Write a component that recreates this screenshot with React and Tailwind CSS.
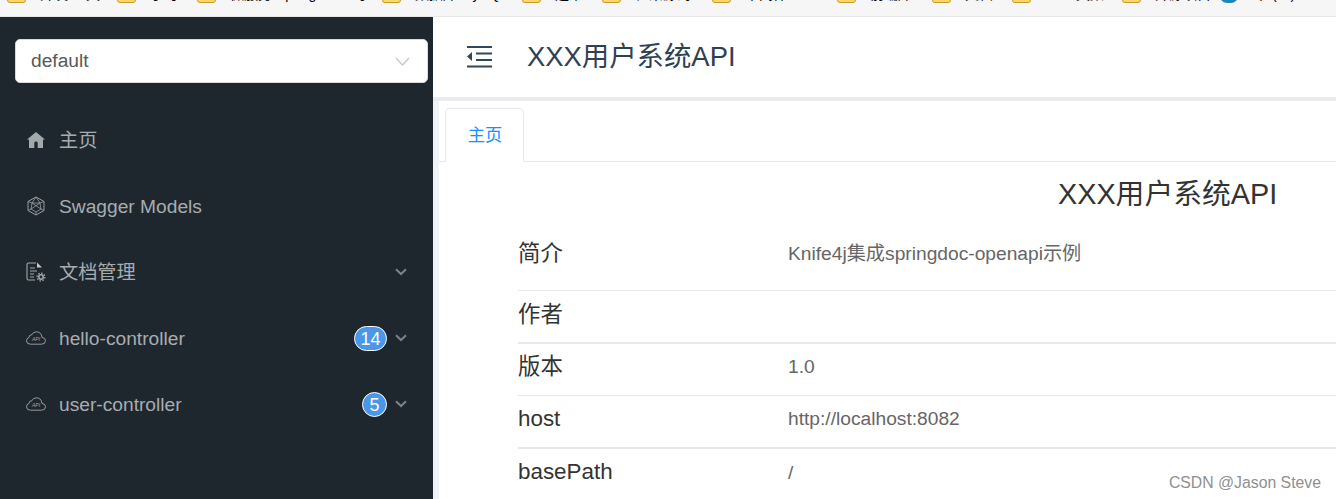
const FONT = '"Liberation Sans", "Noto Sans CJK SC", sans-serif';

const bookmarks = [
  ['w-[110px]', '开发 工具'],
  ['w-[80px]', '学习'],
  ['w-[185px]', '微服务 SpringCloud 学'],
  ['w-[140px]', '数据库 MySQL'],
  ['w-[80px]', '运维'],
  ['w-[110px]', '框架源码'],
  ['w-[125px]', '中间件 Redis'],
  ['w-[95px]', '前端库'],
  ['w-[80px]', '文档'],
  ['w-[110px]', 'AI 工具集'],
  ['w-[98px]', '开源项目'],
];

function Home() {
  return (
    <svg width="18" height="16" viewBox="0 0 18 16" fill="#a3a8ab">
      <path fillRule="evenodd" d="M9 0 L18 7.6 L16 7.6 L16 16 L2 16 L2 7.6 L0 7.6 Z M7.3 16 L7.3 11 Q7.3 9.6 9 9.6 Q10.7 9.6 10.7 11 L10.7 16 Z" />
    </svg>
  );
}

function Models() {
  return (
    <svg width="18" height="20" viewBox="0 0 18 20" fill="none" stroke="#9aa0a4" strokeWidth="1">
      <path d="M9 1 L17 5.5 L17 14.5 L9 19 L1 14.5 L1 5.5 Z" />
      <path d="M9 1 L5 7 L1 5.5 M9 1 L13 7 L17 5.5 M5 7 L13 7 L14 13 L9 16 L4 13 Z M1 14.5 L4 13 M17 14.5 L14 13 M9 19 L9 16 M5 7 L14 13 M13 7 L4 13" strokeWidth="0.8" />
    </svg>
  );
}

function DocGear() {
  return (
    <svg width="20" height="20" viewBox="0 0 20 20" fill="none" stroke="#a3a8ab">
      <path d="M10 1 H2.5 Q1 1 1 2.5 V16.5 Q1 18 2.5 18 H9" strokeWidth="1.1" />
      <path d="M11 0.5 L16 5.5 H11 Z" fill="#c4c8ca" stroke="none" />
      <path d="M4 6 H9 M4 9 H11 M4 12 H8 M4 15 H8" strokeWidth="1.1" />
      <circle cx="15" cy="15" r="2.2" strokeWidth="1.6" />
      <circle cx="15" cy="15" r="3.9" strokeWidth="1.3" strokeDasharray="1.5 1.5" />
    </svg>
  );
}

function CloudApi() {
  return (
    <svg width="20" height="14" viewBox="0 0 20 14" fill="none" stroke="#a3a8ab" strokeWidth="0.9">
      <path d="M4.5 13.2 H15.5 Q19.5 13.2 19.5 9.8 Q19.5 6.8 16 6.4 Q15.5 1 10.5 0.8 Q7 0.8 5.8 3.8 Q3.2 3.6 3 6.4 Q0.5 7.2 0.5 9.8 Q0.5 13.2 4.5 13.2 Z" />
      <text x="10" y="10.4" textAnchor="middle" fontSize="5" fontStyle="italic" fontFamily="Liberation Sans" fill="#a3a8ab" stroke="none">API</text>
    </svg>
  );
}

function Chevron() {
  return (
    <svg width="12" height="8" viewBox="0 0 12 8" fill="none" stroke="#7c8286" strokeWidth="2">
      <path d="M1 1.2 L6 6 L11 1.2" />
    </svg>
  );
}

function NavItem({ icon, label, badge, arrow, badgeW }) {
  return (
    <div className="h-[66px] flex items-center pl-[26px] pr-[26px]">
      <div className="w-[20px] flex justify-center shrink-0">{icon}</div>
      <span className="ml-[13px] pt-[2px] text-[19.2px] text-[#a6adb1] flex-1 whitespace-nowrap">{label}</span>
      {badge && (
        <span className={`${badgeW} h-[25px] mt-[1px] rounded-full bg-[#4a96e8] border-[1.5px] border-white text-white text-[18px] leading-none flex items-center justify-center mr-[8px]`}>
          {badge}
        </span>
      )}
      {arrow && <Chevron />}
    </div>
  );
}

const rows = [
  ['简介', 'Knife4j集成springdoc-openapi示例', 'h-[69px] pb-[5px] border-b'],
  ['作者', '', 'h-[53px] pb-[4px] border-b-2'],
  ['版本', '1.0', 'h-[52px] pb-[6px] border-b'],
  ['host', 'http://localhost:8082', 'h-[53px] pb-[6px] border-b-2'],
  ['basePath', '/', 'h-[52px] pb-[6px]'],
];

export default function App() {
  return (
    <div className="h-[499px] w-[1336px] overflow-hidden flex flex-col bg-white" style={{ fontFamily: FONT }}>
      <div className="h-[17px] shrink-0 bg-[#f6f6f6] border-b border-[#e8e8e8] overflow-hidden flex items-start pl-[7px]">
        {bookmarks.map(([w, t]) => (
          <div key={t} className={`${w} shrink-0 flex items-start -mt-[11px]`}>
            <div className="w-[19px] h-[14px] rounded-[3px] bg-[#fcd76f] border border-[#c99a23] shrink-0" />
            <span className="ml-[14px] -mt-[2px] text-[14px] leading-[14px] text-black whitespace-nowrap">{t}</span>
          </div>
        ))}
        <div className="shrink-0 flex items-start -mt-[11px]">
          <div className="w-[18px] h-[14px] rounded-full bg-[#1c86bd]" />
          <span className="ml-[16px] -mt-[2px] text-[14px] leading-[14px] text-black whitespace-nowrap">中 (一)</span>
        </div>
      </div>

      <div className="flex flex-1 min-h-0">
        <aside className="w-[433px] shrink-0 bg-[#1f272e]">
          <div className="pt-[22px] pl-[15px] pr-[5px]">
            <div className="h-[44px] rounded-[5px] bg-white border border-[#d9d9d9] flex items-center justify-between pl-[15px] pr-[17px]">
              <span className="text-[19.2px] text-[#595959]">default</span>
              <svg width="15" height="9" viewBox="0 0 15 9" fill="none" stroke="#c4c4c4" strokeWidth="1.2">
                <path d="M1 1 L7.5 8 L14 1" />
              </svg>
            </div>
          </div>
          <nav className="mt-[24px]">
            <NavItem icon={<Home />} label="主页" />
            <NavItem icon={<Models />} label="Swagger Models" />
            <NavItem icon={<DocGear />} label="文档管理" arrow />
            <NavItem icon={<CloudApi />} label="hello-controller" badge="14" badgeW="w-[33px]" arrow />
            <NavItem icon={<CloudApi />} label="user-controller" badge="5" badgeW="w-[25px]" arrow />
          </nav>
        </aside>

        <main className="flex-1 min-w-0 flex flex-col relative">
          <header className="h-[80px] shrink-0 flex items-center pl-[34px]">
            <svg width="25" height="22" viewBox="0 0 25 22" fill="#33475a">
              <rect x="0" y="0" width="25" height="2" />
              <rect x="9" y="6.5" width="16" height="2" />
              <rect x="9" y="13" width="16" height="2" />
              <rect x="0" y="19.5" width="25" height="2" />
              <path d="M5 6 V15 L0 10.5 Z" />
            </svg>
            <h1 className="ml-[35px] text-[27.4px] font-normal text-[#2f4053] whitespace-nowrap">XXX用户系统API</h1>
          </header>
          <div className="h-[4px] shrink-0 bg-[#e9ebef]" />
          <div className="flex-1 min-h-0 flex">
            <div className="w-[6px] shrink-0 bg-[#f0f2f5]" />
            <div className="flex-1 min-w-0">
              <div className="pt-[7px] pl-[6px] border-b border-[#e8e8e8] h-[61px]">
                <div className="w-[79px] h-[54px] border border-[#e8e8e8] border-b-white rounded-t-[5px] bg-white flex items-center justify-center pl-[1px] pt-[1px]">
                  <span className="text-[17.33px] text-[#1890ff]">主页</span>
                </div>
              </div>
              <div className="pl-[619px] pt-[12px] h-[60px]">
                <h2 className="text-[28.8px] leading-[40px] font-normal text-[#333] whitespace-nowrap">XXX用户系统API</h2>
              </div>
              <div className="ml-[79px]">
                {rows.map(([k, v, cls]) => (
                  <div key={k} className={`${cls} border-[#e8e8e8] flex items-center`}>
                    <div className="w-[270px] shrink-0 text-[22.4px] text-[#333]">{k}</div>
                    <div className="pt-[2px] text-[19.2px] text-[#666] whitespace-nowrap">{v}</div>
                  </div>
                ))}
              </div>
            </div>
          </div>
          <div className="absolute right-[15px] bottom-[4px] text-[15.8px] text-[#8f8f8f] whitespace-nowrap">CSDN @Jason Steve</div>
        </main>
      </div>
    </div>
  );
}
